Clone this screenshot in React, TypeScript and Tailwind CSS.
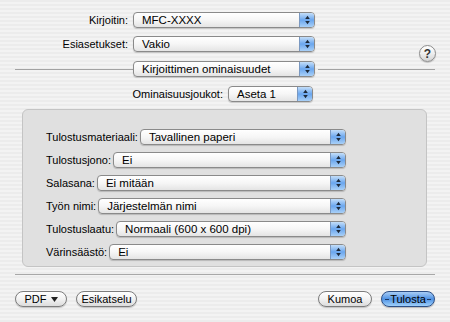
const Arrows = () => (
  <svg width="7" height="10" viewBox="0 0 7 10">
    <path d="M3.5 0.8 L5.8 4 L1.2 4 Z" fill="#1d2a3a" />
    <path d="M3.5 9.2 L5.8 6 L1.2 6 Z" fill="#1d2a3a" />
  </svg>
);

const Popup = ({ value, className = '' }: { value: string; className?: string }) => (
  <div
    className={`flex h-[16px] items-stretch overflow-hidden rounded-[4px] border border-[#8a8a8a] bg-gradient-to-b from-white via-[#f6f6f6] to-[#e4e4e4] shadow-[0_1px_1px_rgba(0,0,0,0.18)] ${className}`}
  >
    <span className="flex-1 truncate pl-[8px] text-[11.5px] leading-[14px] text-black">{value}</span>
    <span className="flex w-[15px] items-center justify-center border-l border-[#7a98c0] bg-gradient-to-b from-[#c4def8] via-[#6aa6ee] to-[#a9d0f7]">
      <Arrows />
    </span>
  </div>
);

const PillButton = ({ children, className = '' }: { children: React.ReactNode; className?: string }) => (
  <div
    className={`flex h-[16px] items-center justify-center rounded-full border border-[#7c7c7c] bg-gradient-to-b from-white via-[#f2f2f2] to-[#dcdcdc] text-[11px] leading-[14px] text-black shadow-[0_1px_1px_rgba(0,0,0,0.2)] ${className}`}
  >
    {children}
  </div>
);

export default function App() {
  const options = [
    ['Tulostusmateriaali:', 'Tavallinen paperi'],
    ['Tulostusjono:', 'Ei'],
    ['Salasana:', 'Ei mitään'],
    ['Työn nimi:', 'Järjestelmän nimi'],
    ['Tulostuslaatu:', 'Normaali (600 x 600 dpi)'],
    ['Värinsäästö:', 'Ei'],
  ];

  return (
    <div className="h-[322px] w-[450px] overflow-hidden bg-[repeating-linear-gradient(to_bottom,#ececec_0px,#ececec_2px,#f3f3f3_2px,#f3f3f3_4px)] pt-[12px] font-['Liberation_Sans',Arial,sans-serif] text-[11px] leading-[16px] text-black">
      {/* Printer */}
      <div className="flex items-center">
        <span className="w-[128px] text-right">Kirjoitin:</span>
        <Popup value="MFC-XXXX" className="ml-[5px] w-[182px]" />
      </div>

      {/* Presets + help */}
      <div className="mt-[8px] flex h-[16px] items-start">
        <span className="w-[128px] text-right">Esiasetukset:</span>
        <Popup value="Vakio" className="ml-[5px] w-[182px]" />
        <div className="ml-[104px] mt-[9px] flex h-[17px] w-[17px] items-center justify-center rounded-full border border-[#8d8d8d] bg-gradient-to-b from-white via-[#eeeeee] to-[#d4d4d4] text-[12px] font-bold leading-none text-[#333] shadow-[0_1px_1px_rgba(0,0,0,0.2)]">
          ?
        </div>
      </div>

      {/* Panel selector */}
      <div className="mt-[9px] flex items-center">
        <div className="ml-[15px] h-px w-[118px] bg-[#a2a2a2]" />
        <Popup value="Kirjoittimen ominaisuudet" className="w-[182px]" />
        <div className="ml-[3px] h-px w-[117px] bg-[#a2a2a2]" />
      </div>

      {/* Feature sets */}
      <div className="mt-[9px] flex items-center">
        <span className="w-[223px] text-right">Ominaisuusjoukot:</span>
        <Popup value="Aseta 1" className="ml-[5px] w-[85px]" />
      </div>

      {/* Group box */}
      <div className="ml-[22px] mt-[7px] h-[158px] w-[405px] rounded-[6px] border border-[#c4c4c4] bg-[#e0e0e0] pl-[23px] pt-[19px]">
        <div className="flex w-[300px] flex-col gap-[7px]">
          {options.map(([label, value]) => (
            <div key={label} className="flex items-center gap-[2px]">
              <span className="whitespace-nowrap">{label}</span>
              <Popup value={value} className="flex-1" />
            </div>
          ))}
        </div>
      </div>

      {/* Separator */}
      <div className="ml-[15px] mt-[7px] h-px w-[420px] bg-[#a8a8a8]" />

      {/* Buttons */}
      <div className="ml-[15px] mt-[16px] flex w-[420px] items-center">
        <PillButton className="w-[52px] gap-[4px]">
          <span>PDF</span>
          <svg width="7" height="5" viewBox="0 0 7 5">
            <path d="M0 0 L7 0 L3.5 5 Z" fill="#222" />
          </svg>
        </PillButton>
        <PillButton className="ml-[9px] w-[61px]">Esikatselu</PillButton>
        <PillButton className="ml-auto w-[54px]">Kumoa</PillButton>
        <div className="ml-[9px] flex h-[16px] w-[54px] items-center justify-center gap-[1px] rounded-full border border-[#2d4f86] bg-gradient-to-b from-[#a9cdf5] via-[#4f92e4] to-[#9fd0fa] text-[11px] leading-[14px] text-black shadow-[0_1px_1px_rgba(0,0,0,0.25)]">
          <span className="h-px w-[4px] bg-[#1d3a66]" />
          <span>Tulosta</span>
          <span className="h-px w-[4px] bg-[#1d3a66]" />
        </div>
      </div>
    </div>
  );
}
